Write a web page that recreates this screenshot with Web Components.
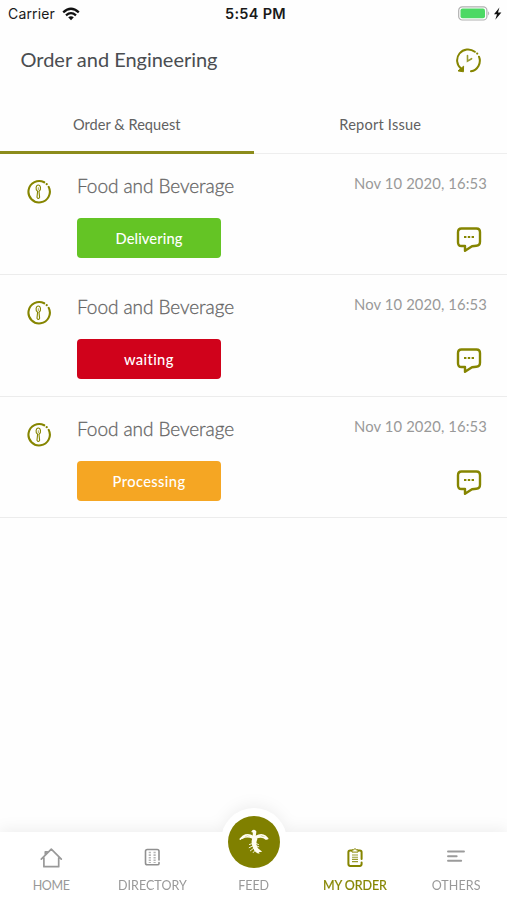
<!DOCTYPE html>
<html lang="en"><head><meta charset="utf-8"><title>Order and Engineering</title>
<style>html,body{margin:0;background:#fefefe}body{height:900px;overflow:hidden}</style></head>
<body><order-app></order-app>
<script>
const define=(name,html,setup)=>customElements.define(name,class extends HTMLElement{
  connectedCallback(){
    if(this.shadowRoot)return;
    this.attachShadow({mode:'open'}).innerHTML=html;
    if(setup)setup(this,this.shadowRoot);
  }
});

// A single line of text tracked out or in to fill its width attribute.
define('fit-text',`<style>:host{display:block;white-space:nowrap;flex:none}span{display:inline-block}</style><span><slot></slot></span>`,(el,r)=>{
  const w=+el.getAttribute('w'),s=r.querySelector('span');
  el.style.width=w+'px';
  s.style.letterSpacing=((w-s.getBoundingClientRect().width)/el.textContent.length)+'px';
});

const icons={
 wifi:[18,14,'<g fill="none" stroke="#111" stroke-width="2.3"><path d="M1.2 5.3Q9-1.8 16.8 5.3"/><path d="M4 8.3Q9 4 14 8.3"/></g><path d="M6.2 10.3Q9 8 11.8 10.3L9 13.2Z" fill="#111"/>'],
 battery:[45,16,'<rect x=".7" y=".8" width="28.2" height="13.2" rx="3.6" fill="#fff" stroke="#b0b0b0" stroke-width="1.2"/><rect x="2.5" y="2.6" width="24.5" height="9.6" rx="2" fill="#4cd964"/><path d="M30.2 5.2Q32.2 7.3 30.2 9.5Z" fill="#aaa"/><path d="M41.4 1.4 36 8.2h3l-1.7 5.6L43.4 6.5h-3.4Z" fill="#111"/>'],
 history:[26,26,'<g fill="none" stroke="#858500" stroke-width="2" stroke-linecap="round"><path d="M5.2 20.8A10.7 10.7 0 0 1 18.8 3.8M23 8.7A10.7 10.7 0 0 1 15 23.3"/><path d="M11.5 7.6V13.2L15.6 10.7" stroke-width="1.6" stroke="#999b30"/></g><path d="M2 22.9 7.6 18.2 7.4 23.8Z" fill="#858500" stroke="#858500" stroke-linejoin="round"/><circle cx="21.2" cy="5.6" r="1.1" fill="#858500"/>'],
 service:[26,26,'<g fill="none" stroke="#858500"><path d="M18.2 3.3A10.7 10.7 0 1 0 22.7 7.9" stroke-width="2.1" stroke-linecap="round"/><path d="M11.6 12.3C9 10.5 10 6 12.3 6S15.6 10.5 13 12.3L13.6 18.2Q12.3 20.7 11 18.2Z" stroke-width="1.1"/><path d="M12.3 8.3V11" stroke-width=".7"/></g><circle cx="20.7" cy="5.2" r="1.1" fill="#858500"/>'],
 chat:[28,28,'<path d="M6.5 2.5H21.5Q25 2.5 25 6V15.8Q25 19.5 21.3 19.8L17 20.2 10 24.8V20H6.5Q3 20 3 16.2V6.3Q3 2.5 6.5 2.5Z" fill="none" stroke="#858500" stroke-width="2.4" stroke-linejoin="round"/><path d="M9 11h2.4M12.8 11h2.4M16.6 11h2.4" stroke="#858500" stroke-width="2"/>'],
 home:[24,22,'<path d="M2.3 12.2 12.3 2.2 22.3 12.2M4.9 10.5V19.7H19.7V10.5M6.3 8V4.8H8.4" fill="none" stroke="#999" stroke-width="1.7" stroke-linejoin="round" stroke-linecap="round"/>'],
 directory:[24,22,'<path d="M19 13V4.3Q19 2.5 17.2 2.5H7.3Q5.5 2.5 5.5 4.3V16Q5.5 17.8 7.3 17.8H17.2Q19 17.8 19 16.7V15.5M19 7V11" fill="none" stroke="#909090" stroke-width="1.6" stroke-linecap="round"/><path d="M9.8 4.7V15.9M14.6 4.7V15.9" stroke="#b5b5b5" stroke-width="2.2" stroke-dasharray="1.6 1"/>'],
 order:[24,22,'<path d="M18.6 12V5.3Q18.6 3.5 16.8 3.5H7.2Q5.4 3.5 5.4 5.3V17.1Q5.4 18.9 7.2 18.9H16.8Q18.6 18.9 18.6 17.1V15.5" fill="none" stroke="#858500" stroke-width="2" stroke-linecap="round"/><path d="M9 2.9H10.4Q12 .3 13.6 2.9H15V5.1H9Z" fill="#fff" stroke="#858500" stroke-width="1"/><path d="M9 8h6M9 10.2h6M9 12.4h6M9 14.6h6" stroke="#999b30" stroke-width="1.1"/>'],
 others:[24,22,'<path d="M4 4.5H20M4 9.2H12.7M4 13.8H17.2" stroke="#9b9b9b" stroke-width="1.9" stroke-linecap="round"/>'],
 emblem:[32,30,'<path d="M15.3 9.7Q10 6.3 5.3 9.2L2.3 12.2M17.8 9.5Q23.5 6.3 27.2 9.2L29.6 11.7M18 11Q24 8.4 28.2 12M4 11.2Q9 8.4 14.7 11" fill="none" stroke="#fffdf0" stroke-width="1.7" stroke-linecap="round"/><path d="M14.7 8.7 14.8 5.5 13.1 5.1 14.6 3.1Q17 1.8 18.4 4.6L17.7 9.4 19.4 12Q17 17 20 21.2L24.2 24.8 20.7 25.2 21.7 26.7Q16.7 26.2 15.2 21Q12.8 16 14 12.2Z" fill="#fffdf0"/><path d="M15 16.4 11.4 17.5M15.3 18.7 11.2 20.7M16.2 20.8 12.4 23.8M17.4 23 15.2 25.6M18 16.5 20.5 17.5M18.3 18.8 20.8 19.8" fill="none" stroke="#fffdf0" stroke-width=".9" stroke-linecap="round"/>']
};
define('app-icon','',(el,r)=>{
  const [w,h,p]=icons[el.getAttribute('name')];
  r.innerHTML=`<style>:host{display:block;flex:none}svg{display:block}</style><svg width="${w}" height="${h}" viewBox="0 0 ${w} ${h}">${p}</svg>`;
});

define('status-bar',`<style>:host{display:grid;grid-template-columns:1fr 61px 1fr;height:28px;box-sizing:border-box;padding:0 4px 0 8px;align-items:center;font:14px/18px Inter,sans-serif;color:#1a1a1a}
.l{display:flex;gap:7px;align-items:center}.t{font-weight:600;font-size:14.5px}.r{justify-self:end}</style>
<div class="l"><fit-text w="47">Carrier</fit-text><app-icon name="wifi"></app-icon></div><fit-text class="t" w="61">5:54 PM</fit-text><app-icon class="r" name="battery"></app-icon>`);

define('page-header','',(el,r)=>{
  r.innerHTML=`<style>:host{display:flex;justify-content:space-between;align-items:center;height:64px;padding:0 25px 0 20.5px;font:20px/28px Lato,sans-serif;color:#4a4d51}fit-text{margin-top:-2px}app-icon{margin-top:1px}</style>
<fit-text w="197">${el.getAttribute('heading')}</fit-text><app-icon name="history"></app-icon>`;
});

define('tab-bar',`<style>:host{display:grid;grid-template-columns:1fr 1fr;height:62px;font:14.6px/20px Lato,sans-serif;color:#616161}
div{box-sizing:border-box;height:62px;padding-top:23px;display:flex;justify-content:center;border-bottom:1px solid #eee}.on{border-bottom:3px solid #8c8c1c}</style>
<div class="on"><fit-text w="107.5">Order &amp; Request</fit-text></div><div><fit-text w="82">Report Issue</fit-text></div>`);

define('order-row',`<style>:host{display:grid;grid-template-columns:77px 1fr auto;height:121.4px;box-sizing:border-box;border-bottom:1px solid #ececec;font-family:Lato,sans-serif}
.i{padding:25px 0 0 26px}.m{padding-top:20px}.n{font-size:19px;line-height:24px;color:#666;font-weight:300;-webkit-text-stroke:.3px #666}
.b{margin-top:20px;width:144px;height:40px;border-radius:4px;display:flex;align-items:center;justify-content:center;color:#fff;font-weight:500;font-size:14.7px;line-height:20px}
.d{padding:19px 20px 0 0;display:flex;flex-direction:column;align-items:flex-end;font-size:14.8px;line-height:20px;color:#999}.d app-icon{margin:33px 4px 0 0}</style>
<div class="i"><app-icon name="service"></app-icon></div><div class="m"><fit-text class="n" w="157">Food and Beverage</fit-text><div class="b"></div></div>
<div class="d"><fit-text w="133">Nov 10 2020, 16:53</fit-text><app-icon name="chat"></app-icon></div>`,(el,r)=>{
  const b=r.querySelector('.b');b.style.background=el.getAttribute('color');
  b.innerHTML=`<fit-text w="${el.getAttribute('w')}">${el.getAttribute('status')}</fit-text>`;
});

define('nav-item','',(el,r)=>{
  const a=n=>el.getAttribute(n);
  r.innerHTML=`<style>:host{display:flex;flex-direction:column;align-items:center;padding-top:15px;gap:9px;font:12.5px/16px Lato,sans-serif;color:#999}
:host([active]){color:#858500;-webkit-text-stroke:.2px #858500}:host([feed]){padding-top:0;gap:10px}
.disc{width:52px;height:52px;border-radius:50%;background:#808000;display:grid;place-items:center;margin-top:-16px}</style>
<div class="${el.hasAttribute('feed')?'disc':'icon'}"><app-icon name="${a('icon')}"></app-icon></div><fit-text w="${a('w')}">${a('label')}</fit-text>`;
});

define('nav-bar',`<style>:host{display:block;height:68px;position:relative;filter:drop-shadow(0 -3px 7px #0000000f)}
.bg{position:absolute;inset:0;background:#fff}.bg::before{content:"";position:absolute;left:221px;top:-24px;width:66px;height:66px;border-radius:50%;background:#fff}
nav{position:relative;display:grid;grid-template-columns:repeat(5,101.25px);padding-left:.5px}</style>
<div class="bg"></div><nav><nav-item icon="home" label="HOME" w="37"></nav-item><nav-item icon="directory" label="DIRECTORY" w="69"></nav-item><nav-item feed icon="emblem" label="FEED" w="31"></nav-item><nav-item active icon="order" label="MY ORDER" w="64"></nav-item><nav-item icon="others" label="OTHERS" w="49"></nav-item></nav>`);

define('order-app',`<style>:host{display:flex;flex-direction:column;width:507px;height:900px}main{flex:1;margin-top:-.2px}</style>
<status-bar></status-bar><page-header heading="Order and Engineering"></page-header><tab-bar></tab-bar>
<main><order-row status="Delivering" color="#64c425" w="67"></order-row><order-row status="waiting" color="#d0021b" w="50"></order-row><order-row status="Processing" color="#f5a623" w="73"></order-row></main><nav-bar></nav-bar>`);
</script></body></html>
